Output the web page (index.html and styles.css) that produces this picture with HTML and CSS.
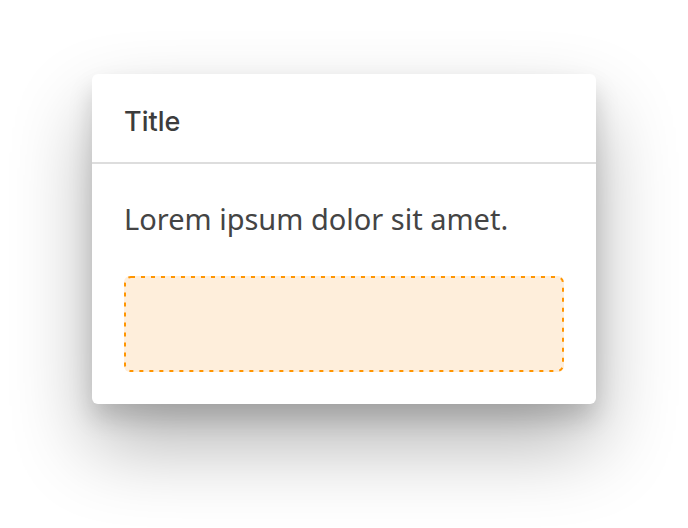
FILE: index.html
```html
<!DOCTYPE html>
<html>
<head>
<meta charset="utf-8">
<link rel="stylesheet" href="styles.css">
</head>
<body>
<div class="stage">
  <div class="card">
    <div class="card-header">
      <h2 class="card-title">Title</h2>
    </div>
    <div class="card-body">
      <p class="card-text">Lorem ipsum dolor sit amet.</p>
      <div class="placeholder">
        <svg class="placeholder-border" width="440" height="96" viewBox="0 0 440 96">
          <rect x="1" y="1" width="438" height="94" rx="6" ry="6" fill="none" stroke="#ff9500" stroke-width="2" stroke-dasharray="4 6"/>
        </svg>
      </div>
    </div>
  </div>
</div>
</body>
</html>
```
FILE: styles.css
```css
html, body {
  margin: 0;
  padding: 0;
  background: #ffffff;
}
body {
  font-family: "Noto Sans", "Liberation Sans", sans-serif;
  color: #444444;
}
.stage {
  min-height: 528px;
  box-sizing: border-box;
  padding: 74px 0 0 92px;
}
.card {
  width: 504px;
  background: #ffffff;
  border-radius: 6px;
  box-shadow: 0 40px 80px rgba(0, 0, 0, 0.3), 0 14px 24px rgba(0, 0, 0, 0.15);
}
.card-header {
  height: 90px;
  box-sizing: border-box;
  padding: 0 32px;
  display: flex;
  align-items: center;
  border-bottom: 2px solid #dddddd;
}
.card-title {
  margin: 0;
  font-family: "Inter", "Noto Sans", sans-serif;
  font-size: 27px;
  font-weight: 500;
  line-height: 28px;
  padding-top: 8px;
  color: #3c3c3c;
}
.card-body {
  padding: 32px;
}
.card-text {
  margin: 0;
  font-size: 29px;
  font-weight: 400;
  line-height: 40px;
  padding-top: 3px;
}
.placeholder {
  margin-top: 37px;
  height: 96px;
  border-radius: 6px;
  background: #feeedb;
}
.placeholder-border {
  display: block;
}
```
